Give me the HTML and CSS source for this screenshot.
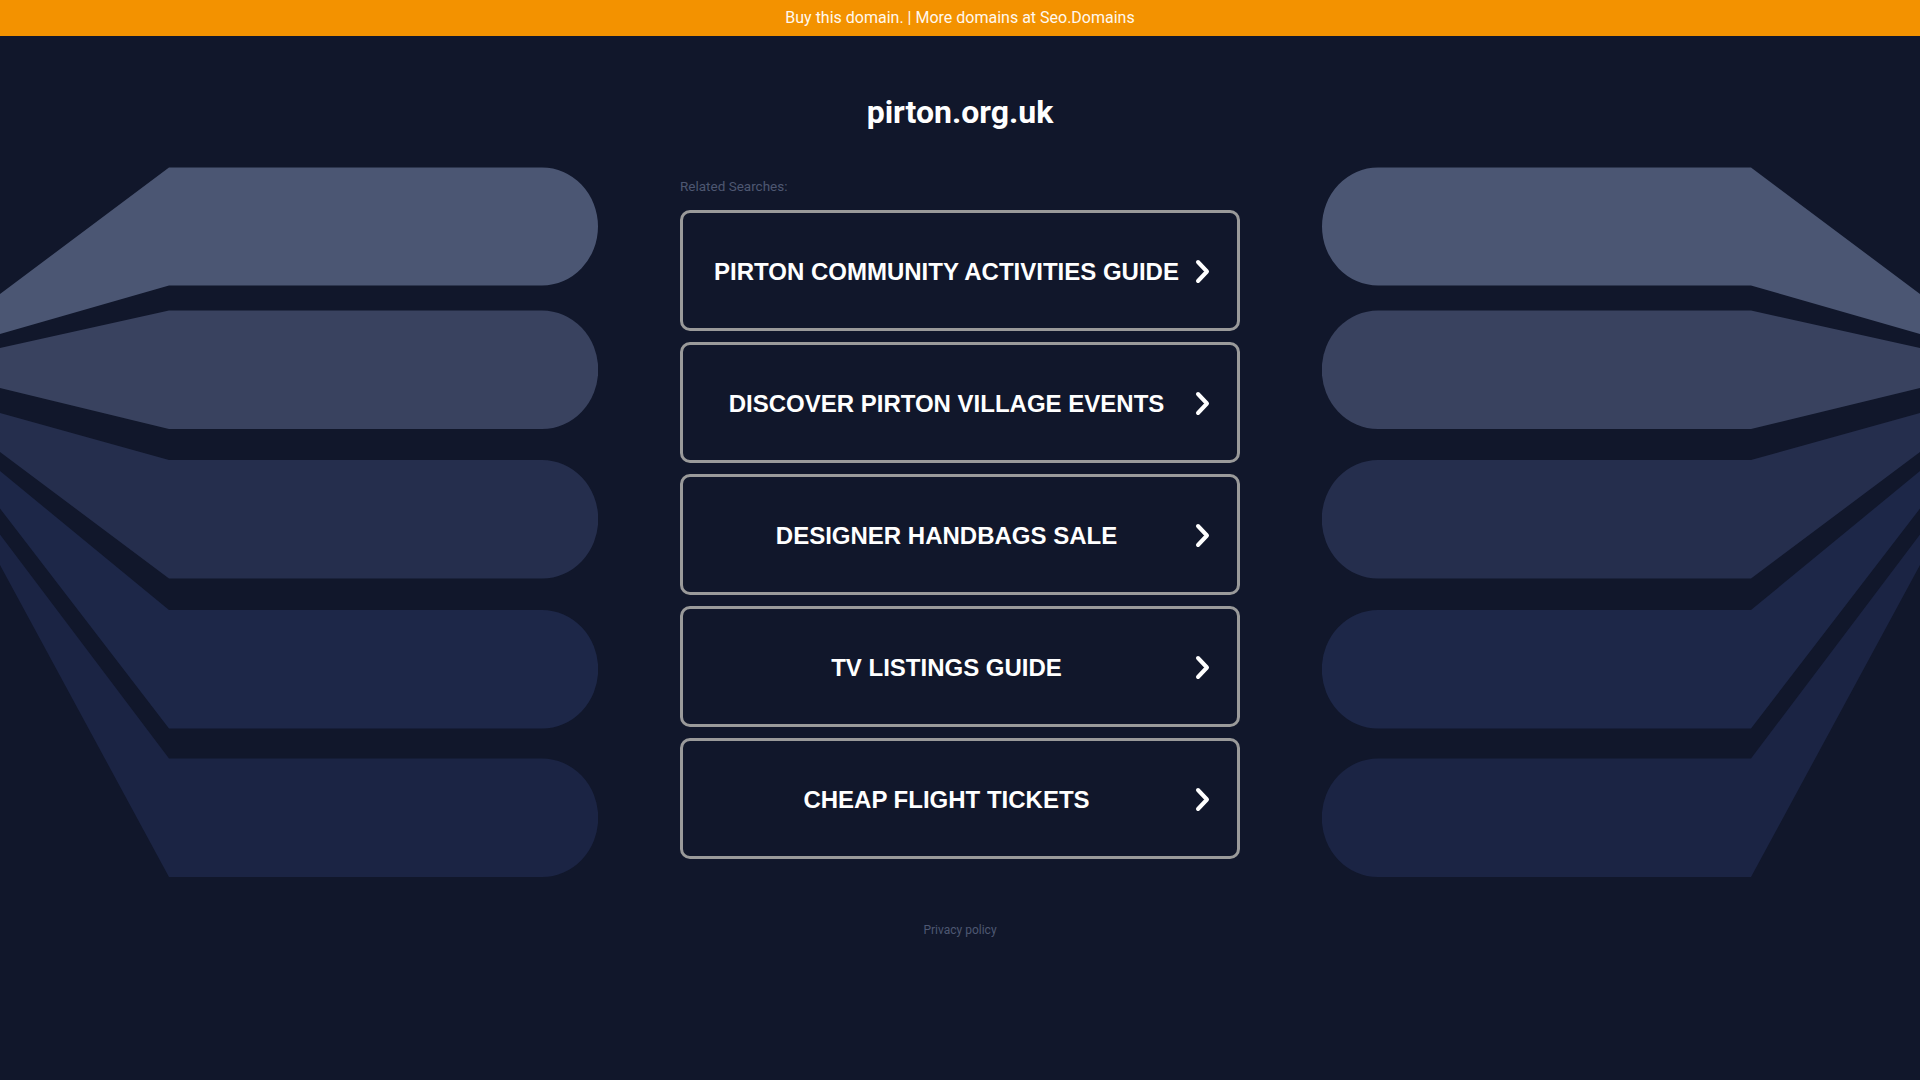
FILE: index.html
```html
<!DOCTYPE html>
<html>
    <head>
        <meta name="viewport" content="width=device-width, initial-scale=1.0">
        <title>pirton.org.uk</title>
        <link rel="stylesheet" href="styles.css">
    </head>
    <body>

        <div class="topbar">
            <a href="#">Buy this domain.</a> | <a href="#">More domains at Seo.Domains</a>
        </div>

        <h1 class="domain">pirton.org.uk</h1>

        <div class="stage">

            <!-- left fan -->
            <svg class="fan" width="598" height="710" viewBox="0 0 598 710">
                <path fill="#4b5673" d="M0 127 L169 0.5 H542 A56 59 0 0 1 542 118.5 H169 L0 167 Z"/>
                <path fill="#39425f" d="M0 181 L169 143.5 H542 A56 59 0 0 1 542 262 H169 L0 221 Z"/>
                <path fill="#252e4d" d="M0 246 L169 293 H542 A56 59 0 0 1 542 411.5 H169 L0 285 Z"/>
                <path fill="#1d2748" d="M0 304 L169 443 H542 A56 59 0 0 1 542 561.5 H169 L0 341.5 Z"/>
                <path fill="#1b2444" d="M0 367.5 L169 591.5 H542 A56 59 0 0 1 542 710 H169 L0 398 Z"/>
            </svg>

            <div class="searches">
                <div class="label">Related Searches:</div>

                <a class="card" href="#">PIRTON COMMUNITY ACTIVITIES GUIDE
                    <svg class="arrow" width="15" height="25" viewBox="0 0 15 25"><polyline points="3,3 12,12.5 3,22"/></svg>
                </a>
                <a class="card" href="#">DISCOVER PIRTON VILLAGE EVENTS
                    <svg class="arrow" width="15" height="25" viewBox="0 0 15 25"><polyline points="3,3 12,12.5 3,22"/></svg>
                </a>
                <a class="card" href="#">DESIGNER HANDBAGS SALE
                    <svg class="arrow" width="15" height="25" viewBox="0 0 15 25"><polyline points="3,3 12,12.5 3,22"/></svg>
                </a>
                <a class="card" href="#">TV LISTINGS GUIDE
                    <svg class="arrow" width="15" height="25" viewBox="0 0 15 25"><polyline points="3,3 12,12.5 3,22"/></svg>
                </a>
                <a class="card" href="#">CHEAP FLIGHT TICKETS
                    <svg class="arrow" width="15" height="25" viewBox="0 0 15 25"><polyline points="3,3 12,12.5 3,22"/></svg>
                </a>
            </div>

            <!-- right fan, same shapes mirrored -->
            <svg class="fan flip" width="598" height="710" viewBox="0 0 598 710">
                <path fill="#4b5673" d="M0 127 L169 0.5 H542 A56 59 0 0 1 542 118.5 H169 L0 167 Z"/>
                <path fill="#39425f" d="M0 181 L169 143.5 H542 A56 59 0 0 1 542 262 H169 L0 221 Z"/>
                <path fill="#252e4d" d="M0 246 L169 293 H542 A56 59 0 0 1 542 411.5 H169 L0 285 Z"/>
                <path fill="#1d2748" d="M0 304 L169 443 H542 A56 59 0 0 1 542 561.5 H169 L0 341.5 Z"/>
                <path fill="#1b2444" d="M0 367.5 L169 591.5 H542 A56 59 0 0 1 542 710 H169 L0 398 Z"/>
            </svg>

        </div>

        <div class="footer">
            <a href="#">Privacy policy</a>
        </div>

    </body>
</html>
```

FILE: styles.css
```css
body {
    margin: 0;
    background: #11172b;
    font-family: Roboto, "Liberation Sans", sans-serif;
}

a {
    color: inherit;
    text-decoration: none;
}

.topbar {
    height: 36px;
    line-height: 36px;
    background: #f39200;
    color: #fff8ee;
    font-size: 16px;
    text-align: center;
}

.domain {
    margin: 57px 0 0;
    line-height: 38px;
    font-size: 32px;
    font-weight: bold;
    color: #ffffff;
    text-align: center;
}

.stage {
    margin-top: 36px;
    display: grid;
    grid-template-columns: 598px 1fr 598px;
}

.fan {
    display: block;
}

.flip {
    transform: scaleX(-1);
}

.searches {
    justify-self: center;
    width: 560px;
    padding-top: 12px;
}

.label {
    font-size: 13.5px;
    line-height: 15px;
    color: #4e5772;
    margin-bottom: 16px;
}

.card {
    position: relative;
    display: flex;
    align-items: center;
    justify-content: center;
    box-sizing: border-box;
    height: 121px;
    margin-bottom: 11px;
    padding: 2px 27px 0 0;
    border: 3px solid #9a9a9a;
    border-radius: 10px;
    color: #ffffff;
    font-family: "Liberation Sans", Arial, sans-serif;
    font-weight: bold;
    font-size: 24px;
    text-align: center;
}

.arrow {
    position: absolute;
    right: 27px;
    top: 50%;
    margin-top: -12px;
}

.arrow polyline {
    fill: none;
    stroke: #ffffff;
    stroke-width: 4;
    stroke-linecap: round;
    stroke-linejoin: round;
}

.footer {
    margin-top: 46px;
    text-align: center;
    font-size: 12px;
    line-height: 14px;
    color: #4e5772;
}
```
